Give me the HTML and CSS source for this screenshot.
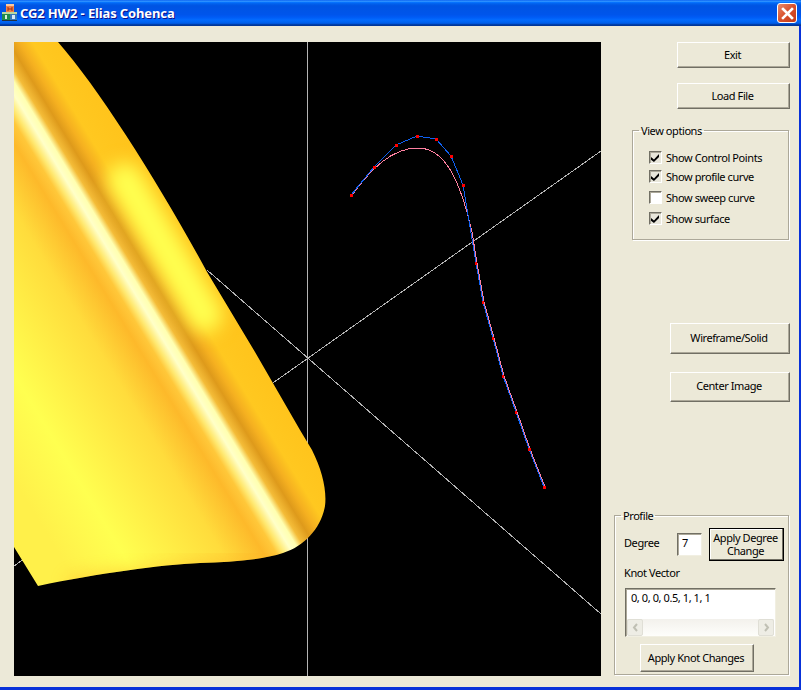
FILE: index.html
```html
<!DOCTYPE html>
<html lang="en">
<head>
  <meta charset="UTF-8">
  <title>CG2 HW2 - Elias Cohenca</title>
  <link rel="stylesheet" href="styles.css">
</head>
<body>
  <div class="window">
    <div class="titlebar">
      <div class="title">
        <svg class="app-icon" width="16" height="18" viewBox="0 0 16 18">
          <rect x="4" y="0" width="8" height="8" fill="#f08048"/>
          <rect x="4" y="0" width="8" height="2" fill="#f8c8a0"/>
          <path d="M6 3v4M10 3v4M6 5h4" stroke="#a03010" fill="none"/>
          <rect x="0" y="8" width="8" height="9" fill="#1f8a4c"/>
          <rect x="8" y="8" width="7" height="9" fill="#3a78b8"/>
          <rect x="0" y="8" width="15" height="2" fill="#b8d8a0"/>
          <rect x="3" y="11" width="2" height="4" fill="#d8f0d8"/>
          <rect x="10" y="11" width="3" height="4" fill="#d8e8f8"/>
          <rect x="0" y="16" width="15" height="1" fill="#203040"/>
        </svg>
        <span>CG2 HW2 - Elias Cohenca</span>
      </div>
      <button class="close-btn">
        <svg width="13" height="13" viewBox="0 0 13 13">
          <path d="M2 2L11 11M11 2L2 11" stroke="#fff" stroke-width="2.6" stroke-linecap="square"/>
        </svg>
      </button>
    </div>

    <div class="client">
      <svg class="viewport" width="587" height="634" viewBox="14 42 587 634">
        <defs>
          <linearGradient id="sheen" gradientUnits="userSpaceOnUse" x1="-157" y1="199" x2="99.5" y2="43">
            <stop offset="0" stop-color="#fff04a"/>
            <stop offset="0.183" stop-color="#ffff50"/>
            <stop offset="0.467" stop-color="#ffdc3c"/>
            <stop offset="0.583" stop-color="#fdb92a"/>
            <stop offset="0.62" stop-color="#ffc83a"/>
            <stop offset="0.64" stop-color="#ffe870"/>
            <stop offset="0.667" stop-color="#ffffc8"/>
            <stop offset="0.69" stop-color="#ffffb0"/>
            <stop offset="0.71" stop-color="#f4bc38"/>
            <stop offset="0.743" stop-color="#de9a1b"/>
            <stop offset="0.773" stop-color="#f5b020"/>
            <stop offset="0.81" stop-color="#ffc820"/>
            <stop offset="1" stop-color="#ffc018"/>
          </linearGradient>
          <clipPath id="sheet">
            <path d="M14 42L58 42C100 90 160 185 207 272L255 352L300 430L312 450C322 470 327 490 325 506C321 528 305 546 283 553C262 560 230 562 200 563C160 565 100 573 38 586L14 547Z"/>
          </clipPath>
          <filter id="soft" x="-50%" y="-50%" width="200%" height="200%" color-interpolation-filters="sRGB">
            <feGaussianBlur stdDeviation="9"/>
          </filter>
        </defs>

        <!-- axes -->
        <g stroke="#b4b4b4" shape-rendering="crispEdges">
          <path d="M307.5 42V676"/>
          <path d="M601 151L14 566"/>
          <path d="M207 270L601 614"/>
        </g>

        <!-- surface -->
        <g clip-path="url(#sheet)">
          <rect x="14" y="42" width="320" height="550" fill="url(#sheen)"/>
          <path d="M125 180L205 315" stroke="#ffff50" stroke-width="34" stroke-linecap="round" filter="url(#soft)"/>
          <path d="M70 592L270 566" stroke="#ffb828" stroke-width="26" opacity="0.6" filter="url(#soft)"/>
        </g>

        <!-- profile curve and its control polygon -->
        <g fill="none" shape-rendering="crispEdges">
          <path stroke="#ff80a0" d="M352 195C372 168 392 148 418 148C445 148 460 180 472 232"/>
          <polyline stroke="#ff80a0" points="472,232 477,263 484,302 494,338 504,376 517,412 530,449 545,487"/>
          <polyline stroke="#1060f0" points="351,195 374,167 396,145 417,136 436,139 451,156 463,185 476,263 483,302 493,338 503,376 516,412 529,449 544,487"/>
        </g>
        <g class="ctrl-pts" fill="#ff0000">
          <rect x="350" y="194" width="3" height="3"/>
          <rect x="373" y="166" width="3" height="3"/>
          <rect x="395" y="144" width="3" height="3"/>
          <rect x="416" y="135" width="3" height="3"/>
          <rect x="435" y="138" width="3" height="3"/>
          <rect x="450" y="155" width="3" height="3"/>
          <rect x="462" y="184" width="3" height="3"/>
          <rect x="475" y="262" width="2" height="3"/>
          <rect x="482" y="301" width="2" height="3"/>
          <rect x="492" y="337" width="2" height="3"/>
          <rect x="502" y="375" width="2" height="3"/>
          <rect x="515" y="411" width="2" height="3"/>
          <rect x="528" y="448" width="3" height="3"/>
          <rect x="543" y="486" width="3" height="3"/>
        </g>
      </svg>

      <div class="sidebar">
        <button class="btn btn-top">Exit</button>
        <button class="btn btn-top load-btn">Load File</button>

        <fieldset class="group view-group">
          <legend>View options</legend>
          <div class="view-body">
            <label class="check-row tight"><input type="checkbox" checked> Show Control Points</label>
            <label class="check-row"><input type="checkbox" checked> Show profile curve</label>
            <label class="check-row"><input type="checkbox"> Show sweep curve</label>
            <label class="check-row"><input type="checkbox" checked> Show surface</label>
          </div>
        </fieldset>

        <button class="btn btn-wide wire-btn">Wireframe/Solid</button>
        <button class="btn btn-wide center-btn">Center Image</button>

        <fieldset class="group profile-group">
          <legend>Profile</legend>
          <div class="profile-body">
            <div class="degree-row">
              <span class="degree-label">Degree</span>
              <input class="degree-input" type="text" value="7">
              <button class="btn apply-degree">Apply Degree Change</button>
            </div>
            <div class="knot-label">Knot Vector</div>
            <div class="knot-box">
              <div class="knot-text">0, 0, 0, 0.5, 1, 1, 1</div>
              <div class="scrollbar">
                <span class="scroll-btn">
                  <svg width="7" height="9" viewBox="0 0 7 9"><path d="M5 1L2 4.500L5 8" fill="none" stroke="#c0c0b4" stroke-width="2"/></svg>
                </span>
                <span class="scroll-btn">
                  <svg width="7" height="9" viewBox="0 0 7 9"><path d="M2 1L5 4.500L2 8" fill="none" stroke="#c0c0b4" stroke-width="2"/></svg>
                </span>
              </div>
            </div>
            <button class="btn apply-knot">Apply Knot Changes</button>
          </div>
        </fieldset>
      </div>
    </div>
  </div>
</body>
</html>
```

FILE: styles.css
```css
/* Reset */
* {
  box-sizing: border-box;
}

html, body {
  margin: 0;
  padding: 0;
}

body {
  width: 801px;
  height: 690px;
  overflow: hidden;
  font-family: 'Noto Sans', 'Liberation Sans', sans-serif;
  font-size: 11px;
  letter-spacing: -0.42px;
  color: #000;
  background-color: #ece9d8;
}

/* Window frame */
.window {
  display: flex;
  flex-direction: column;
  height: 690px;
  border-right: 2px solid #0831d9;
  border-bottom: 3px solid #0831d9;
}

.titlebar {
  display: flex;
  justify-content: space-between;
  align-items: center;
  height: 26px;
  margin-right: -2px;
  padding: 0 4px 0 2px;
  background: linear-gradient(#0058ee 0, #3593ff 4%, #288eff 6%, #127dff 8%, #036ffc 10%, #0262ee 14%, #0057e5 20%, #0054e3 24%, #0055eb 56%, #005bf5 66%, #026afe 76%, #0062ef 86%, #0052d6 92%, #0040ab 94%, #003092 100%);
}

.title {
  display: flex;
  align-items: center;
  gap: 2px;
  color: #fff;
  font-size: 13px;
  font-weight: bold;
  letter-spacing: -0.13px;
  text-shadow: 1px 1px #0f1089;
}

.close-btn {
  display: flex;
  justify-content: center;
  align-items: center;
  width: 20px;
  height: 20px;
  padding: 0;
  border: 1px solid #fff;
  border-radius: 3px;
  background: linear-gradient(135deg, #e98b6c, #d8502c 50%, #c23a18);
}

/* Main area */
.client {
  flex: 1;
  display: flex;
  padding: 16px 0 11px 14px;
}

.viewport {
  display: block;
  flex: none;
  background-color: #000;
}

.sidebar {
  flex: 1;
  display: flex;
  flex-direction: column;
  align-items: flex-end;
  padding: 0 9px 1px 0;
}

/* Buttons */
.btn {
  display: block;
  padding: 0 2px 2px 0;
  font: inherit;
  letter-spacing: inherit;
  color: #000;
  background-color: #ece9d8;
  border: 1px solid;
  border-color: #fff #716f64 #716f64 #fff;
  box-shadow: inset -1px -1px #aca899;
}

.btn-top {
  width: 113px;
  height: 26px;
}

.load-btn {
  margin-top: 15px;
}

.btn-wide {
  width: 120px;
}

.wire-btn {
  height: 31px;
  margin-top: 83px;
}

.center-btn {
  height: 30px;
  margin-top: 18px;
  padding-bottom: 4px;
}

/* Group boxes */
.group {
  margin: 0 1px 0 0;
  padding: 0;
  border: 1px solid #aca899;
  box-shadow: 1px 1px #fff, inset 1px 1px #fff;
}

.group legend {
  margin-left: 6px;
  padding: 0 2px;
  line-height: 13px;
}

.view-group {
  width: 157px;
  height: 116px;
  margin-top: 15px;
}

.view-body {
  padding: 14px 0 0 16px;
}

.check-row {
  display: flex;
  align-items: center;
  gap: 4px;
  height: 13px;
  margin-bottom: 8px;
}

.check-row.tight {
  margin-bottom: 6px;
}

.check-row input {
  appearance: none;
  flex: none;
  width: 13px;
  height: 13px;
  margin: 0;
  background-color: #fff;
  border: 1px solid;
  border-color: #716f64 #fff #fff #716f64;
  box-shadow: inset 1px 1px #aca899;
}

.check-row input:checked {
  background-color: #e8e6da;
}

.check-row input:checked::before {
  content: "";
  display: block;
  width: 11px;
  height: 11px;
  background-color: #000;
  clip-path: polygon(9% 45%, 36% 68%, 82% 18%, 82% 45%, 36% 92%, 9% 70%);
}

.profile-group {
  width: 175px;
  height: 166px;
  margin-top: auto;
}

.profile-body {
  padding: 6px 0 0 9px;
}

.degree-row {
  display: flex;
  align-items: center;
}

.degree-label {
  width: 53px;
  padding-bottom: 5px;
}

.degree-input {
  width: 25px;
  height: 23px;
  padding: 0 0 5px 4px;
  font: inherit;
  background-color: #fff;
  border: 1px solid;
  border-color: #716f64 #f1efe2 #f1efe2 #716f64;
  box-shadow: inset 1px 1px #aca899;
}

.apply-degree {
  width: 75px;
  height: 33px;
  margin-left: 7px;
  line-height: 13px;
  border-color: #000;
  box-shadow: inset -1px -1px #716f64, inset 1px 1px #fff;
}

.knot-label {
  margin-top: 5px;
  line-height: 13px;
}

.knot-box {
  width: 151px;
  height: 49px;
  margin: 9px 0 0 1px;
  display: flex;
  flex-direction: column;
  background-color: #fff;
  border: 1px solid;
  border-color: #716f64 #f1efe2 #f1efe2 #716f64;
  box-shadow: inset 1px 1px #aca899;
}

.knot-text {
  flex: 1;
  padding: 1px 0 0 5px;
}

.scrollbar {
  display: flex;
  justify-content: space-between;
  height: 17px;
  margin: 0 1px;
  background: linear-gradient(#f3f1ec, #fefefb);
}

.scroll-btn {
  display: flex;
  justify-content: center;
  align-items: center;
  width: 16px;
  background-color: #eeede5;
  border: 1px solid #e0dfd6;
  border-radius: 2px;
}

.apply-knot {
  width: 114px;
  height: 28px;
  margin: 7px 0 0 16px;
}
```
